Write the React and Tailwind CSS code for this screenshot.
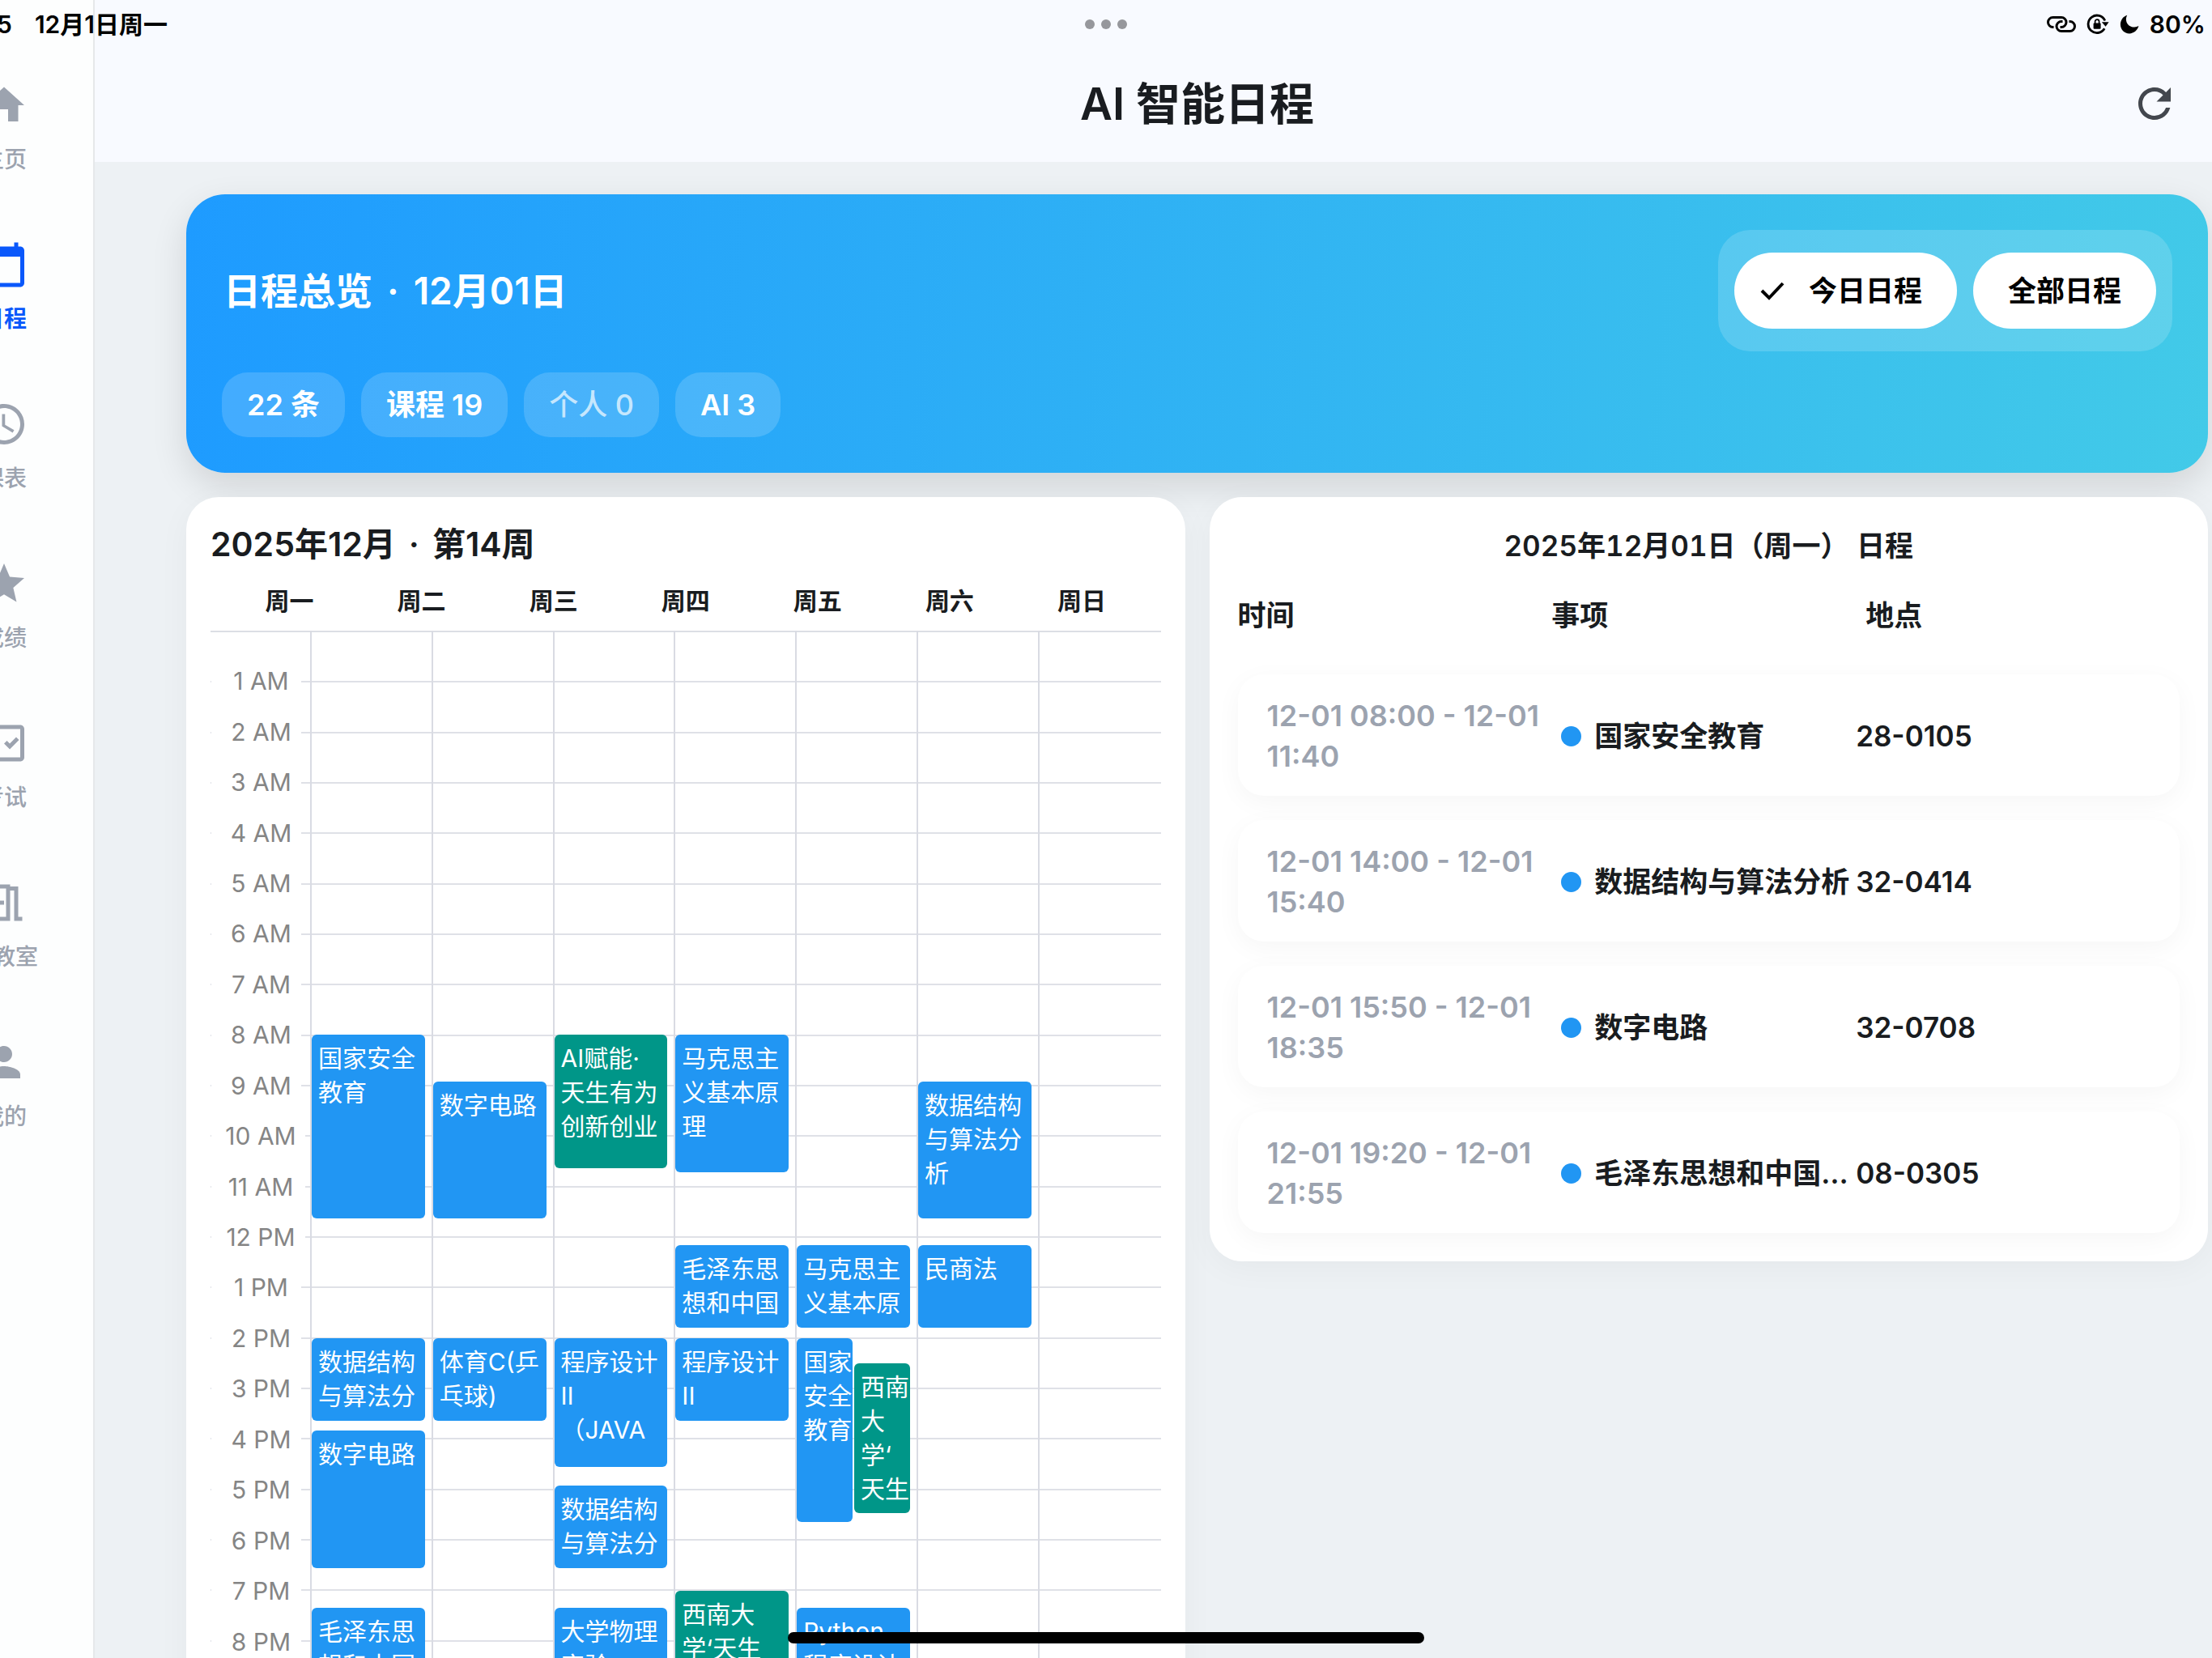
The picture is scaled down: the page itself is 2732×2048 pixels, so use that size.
import React from "react";
import {
  MdHome,
  MdCalendarToday,
  MdAccessTime,
  MdStar,
  MdOutlineFactCheck,
  MdOutlineMeetingRoom,
  MdPerson,
  MdRefresh,
} from "react-icons/md";

const NAV = [
  { label: "主页", Icon: MdHome },
  { label: "日程", Icon: MdCalendarToday, active: true },
  { label: "课表", Icon: MdAccessTime },
  { label: "成绩", Icon: MdStar },
  { label: "考试", Icon: MdOutlineFactCheck },
  { label: "空教室", Icon: MdOutlineMeetingRoom },
  { label: "我的", Icon: MdPerson },
];

const CHIPS = [
  { text: "22 条" },
  { text: "课程 19" },
  { text: "个人 0", muted: true },
  { text: "AI 3" },
];

const WEEKDAYS = ["周一", "周二", "周三", "周四", "周五", "周六", "周日"];

const HOURS = Array.from({ length: 23 }, (_, i) => {
  const h = i + 1;
  return `${h > 12 ? h - 12 : h} ${h < 12 ? "AM" : "PM"}`;
});

/* Start and end are minutes since midnight; lane splits overlapping events. */
const at = (h, m = 0) => h * 60 + m;
const DAYS = [
  [
    { s: at(8), e: at(11, 40), t: "国家安全\n教育" },
    { s: at(14), e: at(15, 40), t: "数据结构\n与算法分" },
    { s: at(15, 50), e: at(18, 35), t: "数字电路" },
    { s: at(19, 20), e: at(21, 55), t: "毛泽东思\n想和中国" },
  ],
  [
    { s: at(8, 55), e: at(11, 40), t: "数字电路" },
    { s: at(14), e: at(15, 40), t: "体育C(乒\n乓球)" },
  ],
  [
    { s: at(8), e: at(10, 40), t: "AI赋能·\n天生有为\n创新创业", ai: true },
    { s: at(14), e: at(16, 35), t: "程序设计\nII\n（JAVA" },
    { s: at(16, 55), e: at(18, 35), t: "数据结构\n与算法分" },
    { s: at(19, 20), e: at(21, 55), t: "大学物理\n实验" },
  ],
  [
    { s: at(8), e: at(10, 45), t: "马克思主\n义基本原\n理" },
    { s: at(12, 10), e: at(13, 50), t: "毛泽东思\n想和中国" },
    { s: at(14), e: at(15, 40), t: "程序设计\nII" },
    { s: at(19), e: at(21, 30), t: "西南大\n学‘天生", ai: true },
  ],
  [
    { s: at(12, 10), e: at(13, 50), t: "马克思主\n义基本原" },
    { s: at(14), e: at(17, 40), t: "国家\n安全\n教育", lane: "left" },
    { s: at(14, 30), e: at(17, 30), t: "西南\n大\n学‘\n天生", lane: "right", ai: true },
    { s: at(19, 20), e: at(21, 55), t: "Python\n程序设计" },
  ],
  [
    { s: at(8, 55), e: at(11, 40), t: "数据结构\n与算法分\n析" },
    { s: at(12, 10), e: at(13, 50), t: "民商法" },
  ],
  [],
];

const AGENDA = [
  { time: "12-01 08:00 - 12-01 11:40", title: "国家安全教育", place: "28-0105" },
  { time: "12-01 14:00 - 12-01 15:40", title: "数据结构与算法分析", place: "32-0414" },
  { time: "12-01 15:50 - 12-01 18:35", title: "数字电路", place: "32-0708" },
  { time: "12-01 19:20 - 12-01 21:55", title: "毛泽东思想和中国…", place: "08-0305" },
];

function StatusBar() {
  return (
    <div className="pointer-events-none absolute inset-x-0 top-0 z-20 grid h-[60px] grid-cols-3 items-center text-[30px] leading-none font-semibold text-black">
      <div className="flex items-center gap-7">
        <span className="-ml-1">5</span>
        <span>12月1日周一</span>
      </div>
      <div className="flex justify-center gap-2">
        <span className="size-3 rounded-full bg-[#96979c]" />
        <span className="size-3 rounded-full bg-[#96979c]" />
        <span className="size-3 rounded-full bg-[#96979c]" />
      </div>
      <div className="flex items-center justify-end gap-[13px] pr-2">
        <svg className="h-[22px] w-9" viewBox="0 0 36 22" fill="none" stroke="currentColor" strokeWidth="3" strokeLinecap="butt">
          <path d="M8.5 14.5H7.5A6 6 0 0 1 7.5 2.5H18A6 6 0 0 1 18 14.5H16.5" />
          <path d="M27.5 7.5H28.5A6 6 0 0 1 28.5 19.5H18A6 6 0 0 1 18 7.5H19.5" />
        </svg>
        <svg className="h-[26px] w-[28px]" viewBox="0 0 28 26" fill="none">
          <path d="M22.2 18.3A10.8 10.8 0 1 1 22.8 8.5" stroke="currentColor" strokeWidth="2.8" />
          <path d="M18.8 10.2H27.6L23.6 15.8Z" fill="currentColor" />
          <rect x="8.6" y="11.4" width="9" height="7.4" rx="1.2" fill="currentColor" />
          <path d="M10.6 12V9.6A2.5 2.5 0 0 1 15.6 9.6V12" stroke="currentColor" strokeWidth="1.7" />
        </svg>
        <svg className="h-6 w-6" viewBox="0 0 24 24" fill="currentColor">
          <path d="M9.2 0.8C8 3 7.6 5.4 8.1 7.8C9 12.6 13.4 15.9 18.4 15.6C20.2 15.5 21.9 15 23.4 14.1C22 19.6 17.4 23.4 12 23.4C5.8 23.4 0.9 18.5 0.9 12.3C0.9 6.9 4.3 2.3 9.2 0.8Z" />
        </svg>
        <span>80%</span>
      </div>
    </div>
  );
}

function Sidebar() {
  return (
    <aside className="w-[117px] shrink-0 overflow-hidden border-r-2 border-[#e6e8ea] bg-[#fdfefe]">
      <nav className="-ml-[106px] flex w-[222px] flex-col gap-[79px] pt-[100px]">
        {NAV.map(({ label, Icon, active }) => (
          <a
            key={label}
            href="#"
            aria-current={active ? "page" : undefined}
            className={
              active
                ? "flex flex-col items-center gap-4 font-semibold text-[#0a58fb]"
                : "flex flex-col items-center gap-4 font-medium text-[#9ca3af]"
            }
          >
            <Icon className="size-[60px]" />
            <span className="text-[28px] leading-[42px]">{label}</span>
          </a>
        ))}
      </nav>
    </aside>
  );
}

function Overview() {
  return (
    <section className="flex flex-col gap-[26px] rounded-[48px] bg-[linear-gradient(95deg,#1e9bff,#42cae8)] p-11 text-white shadow-[0_16px_44px_rgba(0,0,0,0.12)]">
      <div className="flex items-center justify-between">
        <h2 className="flex items-center gap-[18px] pl-0.5 text-[46px] leading-none font-semibold">
          <span>日程总览</span>
          <span>·</span>
          <span>12月01日</span>
        </h2>
        <div className="flex gap-5 rounded-[40px] bg-white/16 px-5 py-7 text-[35px] leading-none font-semibold text-black">
          <button type="button" aria-pressed="true" className="flex h-[94px] items-center gap-[30px] rounded-full bg-white pr-[43px] pl-8">
            <svg className="h-[30px] w-[30px]" viewBox="0 0 30 30" fill="none" stroke="currentColor" strokeWidth="4">
              <path d="M2 15L11 24L28 6" />
            </svg>
            今日日程
          </button>
          <button type="button" aria-pressed="false" className="h-[94px] rounded-full bg-white px-[43px]">
            全部日程
          </button>
        </div>
      </div>
      <ul className="flex gap-5">
        {CHIPS.map((c) => (
          <li
            key={c.text}
            className={
              c.muted
                ? "flex h-20 items-center rounded-[32px] bg-white/16 px-[31px] text-4xl leading-none font-medium text-white/70"
                : "flex h-20 items-center rounded-[32px] bg-white/16 px-[31px] text-4xl leading-none font-semibold"
            }
          >
            {c.text}
          </li>
        ))}
      </ul>
    </section>
  );
}

function EventBlock({ event }) {
  const style = {
    top: `${(event.s / 1440) * 100}%`,
    height: `calc(${((event.e - event.s) / 1440) * 100}% - 2px)`,
  };
  const tone = event.ai ? "bg-[#009688]" : "bg-[#2196f3]";
  const span =
    event.lane === "left"
      ? "left-0 right-1/2 mr-[5px]"
      : event.lane === "right"
        ? "left-1/2 -ml-[3px] right-2"
        : "left-0 right-2";
  return (
    <div
      style={style}
      className={`absolute overflow-hidden rounded-md pt-2 pl-2 text-[30px] leading-[42px] whitespace-pre text-white ${tone} ${span}`}
    >
      {event.t}
    </div>
  );
}

function WeekCalendar() {
  return (
    <section className="rounded-[40px] bg-white p-[30px] shadow-[0_8px_40px_rgba(0,0,0,0.04)]">
      <h2 className="flex gap-4 text-[41px] leading-[56px] font-semibold text-[#191c20]">
        <span>2025年12月</span>
        <span>·</span>
        <span>第14周</span>
      </h2>
      <div className="grid h-[79px] grid-cols-7 px-4 pt-[22px] text-center text-[30px] leading-10 font-semibold text-[#191c20]">
        {WEEKDAYS.map((d) => (
          <span key={d}>{d}</span>
        ))}
      </div>
      <div className="relative h-[1498px]">
        <div className="absolute inset-0 grid grid-rows-24 border-t-2 border-[#dcdee5]">
          {HOURS.map((h) => (
            <div key={h} className="border-b-2 border-[#dfe1e7]" />
          ))}
        </div>
        <div className="relative flex h-full">
          <div className="flex w-[125px] shrink-0 flex-col border-r-2 border-[#d9dbe3] py-[31px] text-[30px] leading-10 text-[#858585]">
            {HOURS.map((h) => (
              <div key={h} className="flex min-h-0 flex-1 items-center pl-px">
                <span
                  className={
                    h.length > 4
                      ? "mr-[6px] flex-1 bg-white pl-[6px] text-center"
                      : "mr-[11px] flex-1 bg-white pl-3 text-center"
                  }
                >
                  {h}
                </span>
              </div>
            ))}
          </div>
          <div className="grid flex-1 grid-cols-7">
            {DAYS.map((events, i) => (
              <div key={WEEKDAYS[i]} className="relative border-r-2 border-[#d9dbe3] last:border-r-0">
                {events.map((e) => (
                  <EventBlock key={e.s} event={e} />
                ))}
              </div>
            ))}
          </div>
        </div>
      </div>
    </section>
  );
}

function Agenda() {
  return (
    <section className="rounded-[40px] bg-white p-[35px] shadow-[0_8px_40px_rgba(0,0,0,0.04)]">
      <table className="block text-[#191c20]">
        <caption className="block text-center text-[35px] leading-[50px] font-semibold tabular-nums">
          2025年12月01日（周一） 日程
        </caption>
        <thead className="block pt-9">
          <tr className="grid grid-cols-3 text-left text-[35px] leading-[50px]">
            <th className="font-semibold">时间</th>
            <th className="font-semibold">事项</th>
            <th className="font-semibold">地点</th>
          </tr>
        </thead>
        <tbody className="flex flex-col gap-[30px] pt-12 text-[35px] leading-[50px]">
          {AGENDA.map((a) => (
            <tr
              key={a.time}
              className="grid h-[150px] grid-cols-3 items-center rounded-[32px] bg-white px-9 pt-0.5 shadow-[0_8px_32px_rgba(0,0,0,0.04)]"
            >
              <td className="text-4xl leading-[50px] font-semibold text-[#9ca3af]">{a.time}</td>
              <td className="flex min-w-0 items-center gap-4 font-semibold">
                <span className="size-[25px] shrink-0 rounded-full bg-[#2196f3]" />
                <span className="truncate">{a.title}</span>
              </td>
              <td className="font-semibold">{a.place}</td>
            </tr>
          ))}
        </tbody>
      </table>
    </section>
  );
}

export default function App() {
  return (
    <div
      lang="zh-CN"
      className="relative flex h-screen w-full overflow-hidden bg-[#edf1f4] font-['Inter','Noto_Sans_CJK_SC',sans-serif]"
    >
      <StatusBar />
      <Sidebar />
      <div className="flex min-w-0 flex-1 flex-col">
        <header className="grid h-[200px] shrink-0 grid-cols-[1fr_auto_1fr] items-center bg-[#f8faff] pt-14 pr-[5px] pl-[113px]">
          <h1 className="col-start-2 text-[55px] leading-none font-semibold text-[#191c20]">AI 智能日程</h1>
          <button type="button" aria-label="刷新" className="mr-9 justify-self-end text-[#43474e]">
            <MdRefresh className="size-[60px]" />
          </button>
        </header>
        <main className="flex min-h-0 flex-1 flex-col gap-[30px] overflow-hidden pt-10 pr-[5px] pl-[113px]">
          <Overview />
          <div className="grid grid-cols-2 items-start gap-[30px]">
            <WeekCalendar />
            <Agenda />
          </div>
        </main>
      </div>
      <div className="absolute bottom-[18px] left-1/2 z-20 h-[14px] w-[786px] -translate-x-1/2 rounded-full bg-black" />
    </div>
  );
}
